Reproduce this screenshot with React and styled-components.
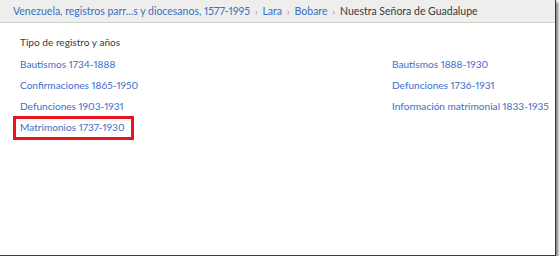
import React from "react";
import styled, { createGlobalStyle } from "styled-components";

const Global = createGlobalStyle`
  html, body { margin: 0; padding: 0; background: #ffffff; }
  body {
    font-family: "Lato", "Open Sans", sans-serif;
    font-variant-numeric: proportional-nums;
    font-feature-settings: "pnum" 1;
  }
`;

const Frame = styled.div`
  width: 555px;
  height: 255px;
  background: #ffffff;
  border-right: 1px solid #3a3a3a;
  border-bottom: 1px solid #3a3a3a;
  box-shadow: 2px 2px 3px rgba(0, 0, 0, 0.55);
  overflow: hidden;
`;

const Crumbs = styled.nav`
  height: 22px;
  background: #eeeeec;
  border-bottom: 1px solid #c9d0c4;
  display: flex;
  align-items: center;
  padding-left: 13px;
  font-size: 10.5px;
  color: #333333;
  white-space: nowrap;
`;

const Crumb = styled.a`
  color: #3b6fc6;
  text-decoration: none;
`;

const Current = styled.span`
  color: #3a3a3a;
`;

const Sep = styled.span`
  color: #8a8a8a;
  font-size: 9px;
  margin: 0 5px;
`;

const Body = styled.section`
  padding: 9px 0 0 20px;
  font-size: 10.1px;
`;

const Title = styled.div`
  color: #3a3a3a;
  line-height: 21px;
  margin-bottom: 1px;
`;

const Columns = styled.div`
  display: grid;
  grid-template-columns: 372px 1fr;
`;

const List = styled.ul`
  list-style: none;
  margin: 0;
  padding: 0;
`;

const Item = styled.li`
  line-height: 21px;
  height: 21px;
  white-space: nowrap;
`;

const Link = styled.a`
  color: #3b6fc6;
  text-decoration: none;
`;

const Highlight = styled.span`
  position: relative;
  &::after {
    content: "";
    position: absolute;
    left: -7px;
    right: -9px;
    top: -5px;
    bottom: -7px;
    border: 3px solid #e5141e;
    pointer-events: none;
  }
`;

const left = [
  "Bautismos 1734-1888",
  "Confirmaciones 1865-1950",
  "Defunciones 1903-1931",
  "Matrimonios 1737-1930",
];
const right = [
  "Bautismos 1888-1930",
  "Defunciones 1736-1931",
  "Información matrimonial 1833-1935",
];

export default function App() {
  return (
    <>
      <Global />
      <Frame>
        <Crumbs>
          <Crumb href="#">Venezuela, registros parr...s y diocesanos, 1577-1995</Crumb>
          <Sep>›</Sep>
          <Crumb href="#">Lara</Crumb>
          <Sep>›</Sep>
          <Crumb href="#">Bobare</Crumb>
          <Sep>›</Sep>
          <Current>Nuestra Señora de Guadalupe</Current>
        </Crumbs>
        <Body>
          <Title>Tipo de registro y años</Title>
          <Columns>
            <List>
              {left.map((t, i) => (
                <Item key={t}>
                  {i === 3 ? (
                    <Highlight>
                      <Link href="#">{t}</Link>
                    </Highlight>
                  ) : (
                    <Link href="#">{t}</Link>
                  )}
                </Item>
              ))}
            </List>
            <List>
              {right.map((t) => (
                <Item key={t}>
                  <Link href="#">{t}</Link>
                </Item>
              ))}
            </List>
          </Columns>
        </Body>
      </Frame>
    </>
  );
}
